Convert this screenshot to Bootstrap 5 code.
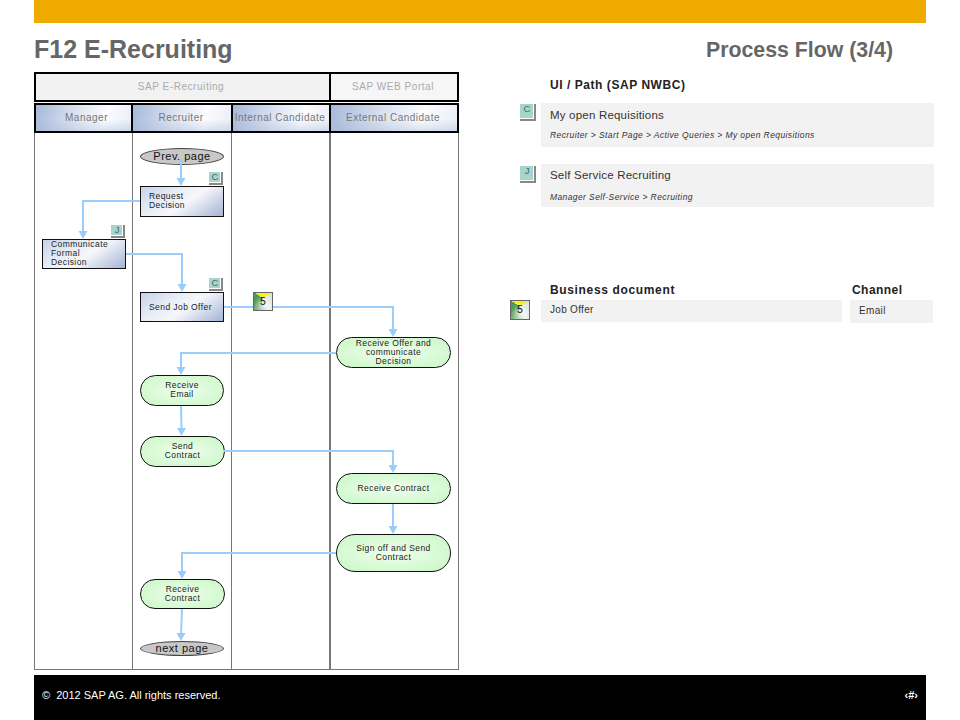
<!DOCTYPE html>
<html lang="en">
<head>
<meta charset="utf-8">
<title>F12 E-Recruiting</title>
<link href="https://cdn.jsdelivr.net/npm/bootstrap@5.3.0/dist/css/bootstrap.min.css" rel="stylesheet">
<style>
html,body{height:720px;overflow:hidden;background:#fff;}
body{font-family:"Liberation Sans",Arial,sans-serif;color:#222;}
.slide-bar{height:23px;margin:0 34px;background:#f0ab00;}
.slide-head{height:49px;margin:0 34px;padding-right:33px;}
.slide-title{font-size:25px;font-weight:700;color:#666;margin:0;line-height:1;padding-top:3px;}
.slide-sub{font-size:21.300px;font-weight:700;color:#666;margin:0;line-height:1;padding-top:6px;}
.slide-main{height:603px;padding-left:34px;}
.lanes{width:425px;height:598px;flex:none;}
.lane-groups,.lane-heads{display:grid;grid-template-columns:98px 100px 98px 129px;}
.lane-body{display:grid;grid-template-columns:99px 99px 99px 128px;}
.lane-groups{height:30px;margin-bottom:1px;}
.group-a,.group-b{border:2px solid #000;display:flex;align-items:center;justify-content:center;padding-bottom:2px;font-size:10px;letter-spacing:.55px;color:#aaa;}
.group-a{grid-column:span 3;background:#f2f2f2;border-right:1px solid #000;padding-right:3px;}
.group-b{background:#f6f6f6;border-left:1px solid #000;padding-right:2px;}
.lane-heads{height:30px;}
.lane-h{border:2px solid #000;border-left-width:1px;border-right-width:1px;display:flex;align-items:center;justify-content:center;padding-bottom:2px;font-size:10px;letter-spacing:.5px;color:#777;white-space:nowrap;background:linear-gradient(to top,rgba(160,180,215,.38),rgba(160,180,215,0) 45%),linear-gradient(105deg,#a6b8da 0,#dfe6f2 45%,#fbfcfe 72%,#e9eef6 100%);}
.lane-h:first-child{border-left-width:2px;padding-left:6px;}
.lane-h:nth-child(2){padding-right:2px;}
.lane-h:nth-child(3){padding-right:2px;}
.lane-h:last-child{border-right-width:2px;padding-right:2px;}
.lane-body{height:537px;}
.lane-c{border:1px solid #777;border-top:0;border-left:0;}
.lane-c:first-child{border-left:1px solid #777;}
.lane-c:nth-child(3){border-right-width:2px;}
.wires{left:0;top:0;width:425px;height:598px;pointer-events:none;z-index:3;}
.node{position:absolute;z-index:2;font-size:8.5px;line-height:9px;letter-spacing:.42px;color:#222;}
.node-step{border:1px solid #111;background:linear-gradient(145deg,#c8d3e8 0,#e9eef6 35%,#f6f7fb 55%,#a4b4d3 100%);padding-left:8px;}
.node-ext{border:1px solid #111;background:radial-gradient(ellipse at 50% 50%,#effeee 0,#c9f7c4 100%);text-align:center;}
.node-up{padding-bottom:2px;}
.node-page{border:1px solid #444;border-radius:50%;background:#c8c8c8;font-size:11px;line-height:1;letter-spacing:.5px;color:#111;text-align:center;}
.tag{position:absolute;z-index:4;width:14px;height:13px;background:#a8d4ce;border-right:2px solid #888;border-bottom:2px solid #888;box-shadow:inset -1px -1px 0 #fff;font-size:9.5px;line-height:10px;text-align:center;color:#3a6a6a;}
.doc-tag{border:1px solid #666;background:radial-gradient(circle at 60% 65%,rgba(255,255,255,.7),rgba(255,255,255,0) 65%),conic-gradient(from -55deg at 50% 32%,#f6ee1e 0 110deg,#dbe5de 110deg 170deg,#e6efe8 210deg,#8fc090 255deg,#5da35f 290deg,#4f9a55 305deg);color:#111;font-size:10.500px;line-height:16px;text-align:center;box-shadow:none;}
.side{width:393px;margin-left:82px;flex:none;position:relative;}
.side-h{font-size:12px;font-weight:700;letter-spacing:.55px;color:#222;line-height:14px;}
.side-row{background:#f2f2f2;}
.side-name{font-size:11.500px;letter-spacing:.2px;color:#333;line-height:14px;}
.side-path{font-size:8.500px;letter-spacing:.4px;font-style:italic;color:#333;line-height:10px;}
.panel-a{height:44px;margin-top:3px;padding:5px 0 0 9px;}
.panel-a .side-path{margin-top:8px;}
.panel-b{height:43px;margin-top:17px;padding:4px 0 0 9px;}
.panel-b .side-path{margin-top:10px;}
.side-top{padding:6px 0 0 9px;height:22px;box-sizing:content-box;}
.side-doc{margin-top:76px;}
.doc-col{width:301px;}
.doc-col .side-h{padding-left:9px;margin-bottom:3px;letter-spacing:.65px;}
.chan-col{width:83px;margin-left:8px;}
.chan-col .side-h{padding-left:2px;margin-bottom:3px;letter-spacing:.45px;}
.doc-box{height:22px;padding:3px 0 0 9px;font-size:10px;letter-spacing:.3px;color:#333;line-height:14px;}
.chan-box{height:23px;margin-top:1px;padding:4px 0 0 9px;font-size:10px;letter-spacing:.35px;color:#333;line-height:14px;}
.slide-foot{height:45px;margin:0 34px;padding:0 8px 4px;background:#000;color:#fff;font-size:11px;}
.foot-num{font-weight:700;font-size:11px;}
</style>
</head>
<body>
<div class="slide-bar"></div>
<div class="slide-head d-flex align-items-center justify-content-between">
  <h1 class="slide-title">F12 E-Recruiting</h1>
  <h2 class="slide-sub">Process Flow (3/4)</h2>
</div>
<div class="slide-main d-flex">
  <div class="lanes position-relative">
    <div class="lane-groups">
      <div class="group-a">SAP E-Recruiting</div>
      <div class="group-b">SAP WEB Portal</div>
    </div>
    <div class="lane-heads">
      <div class="lane-h">Manager</div>
      <div class="lane-h">Recruiter</div>
      <div class="lane-h">Internal Candidate</div>
      <div class="lane-h">External Candidate</div>
    </div>
    <div class="lane-body">
      <div class="lane-c"></div><div class="lane-c"></div><div class="lane-c"></div><div class="lane-c"></div>
    </div>
    <svg class="wires position-absolute" viewBox="0 0 425 598" aria-hidden="true">
      <g fill="none" stroke="#9accfc" stroke-width="2">
        <path d="M147 88V108"/>
        <path d="M106 129H49V161"/>
        <path d="M92 182H148V214"/>
        <path d="M190 235H359V259"/>
        <path d="M302 281H147V297"/>
        <path d="M147 334L147.500 358"/>
        <path d="M190 379H359V395"/>
        <path d="M359 432V456"/>
        <path d="M302 481H148V501"/>
        <path d="M148 537L147 563"/>
      </g>
      <g fill="#9accfc">
        <path d="M142.500 106H151.500L147 114Z"/>
        <path d="M44.500 159H53.500L49 167Z"/>
        <path d="M143.500 212H152.500L148 220Z"/>
        <path d="M354.500 257H363.500L359 265Z"/>
        <path d="M142.500 295H151.500L147 303Z"/>
        <path d="M143 356H152L147.500 364Z"/>
        <path d="M354.500 393H363.500L359 401Z"/>
        <path d="M354.500 454H363.500L359 462Z"/>
        <path d="M143.500 499H152.500L148 507Z"/>
        <path d="M142.500 561H151.500L147 569Z"/>
      </g>
    </svg>
    <div class="node node-page d-flex align-items-center justify-content-center" style="left:106px;top:76px;width:84px;height:17px">Prev. page</div>
    <div class="tag" style="left:175px;top:100px">C</div>
    <div class="node node-step node-up d-flex align-items-center" style="left:106px;top:114px;width:84px;height:31px">Request<br>Decision</div>
    <div class="tag" style="left:77px;top:153px">J</div>
    <div class="node node-step node-up d-flex align-items-center" style="left:8px;top:167px;width:84px;height:30px">Communicate<br>Formal<br>Decision</div>
    <div class="tag" style="left:175px;top:206px">C</div>
    <div class="node node-step d-flex align-items-center" style="left:106px;top:220px;width:84px;height:30px">Send Job Offer</div>
    <div class="tag doc-tag" style="left:219px;top:220px;width:20px;height:19px">5</div>
    <div class="node node-ext rounded-pill d-flex align-items-center justify-content-center" style="left:302px;top:265px;width:115px;height:31px">Receive Offer and<br>communicate<br>Decision</div>
    <div class="node node-ext node-up rounded-pill d-flex align-items-center justify-content-center" style="left:106px;top:303px;width:84px;height:31px">Receive<br>Email</div>
    <div class="node node-ext node-up rounded-pill d-flex align-items-center justify-content-center" style="left:106px;top:364px;width:85px;height:31px">Send<br>Contract</div>
    <div class="node node-ext rounded-pill d-flex align-items-center justify-content-center" style="left:302px;top:401px;width:115px;height:31px">Receive Contract</div>
    <div class="node node-ext rounded-pill d-flex align-items-center justify-content-center" style="left:302px;top:462px;width:115px;height:38px">Sign off and Send<br>Contract</div>
    <div class="node node-ext rounded-pill d-flex align-items-center justify-content-center" style="left:106px;top:507px;width:85px;height:30px">Receive<br>Contract</div>
    <div class="node node-page d-flex align-items-center justify-content-center" style="left:106px;top:569px;width:84px;height:15px">next page</div>
  </div>
  <div class="side">
    <div class="side-top side-h">UI / Path (SAP NWBC)</div>
    <div class="position-relative">
      <div class="tag" style="left:-21px;top:1px;width:16px;height:17px">C</div>
      <div class="side-row panel-a">
        <div class="side-name">My open Requisitions</div>
        <div class="side-path">Recruiter &gt; Start Page &gt; Active Queries &gt; My open Requisitions</div>
      </div>
    </div>
    <div class="position-relative">
      <div class="tag" style="left:-21px;top:2px;width:16px;height:17px">J</div>
      <div class="side-row panel-b">
        <div class="side-name">Self Service Recruiting</div>
        <div class="side-path">Manager Self-Service &gt; Recruiting</div>
      </div>
    </div>
    <div class="side-doc d-flex position-relative">
      <div class="tag doc-tag" style="left:-31px;top:17px;width:20px;height:20px">5</div>
      <div class="doc-col">
        <div class="side-h">Business document</div>
        <div class="side-row doc-box">Job Offer</div>
      </div>
      <div class="chan-col">
        <div class="side-h">Channel</div>
        <div class="side-row chan-box">Email</div>
      </div>
    </div>
  </div>
</div>
<div class="slide-foot d-flex align-items-center justify-content-between">
  <span>©&nbsp; 2012 SAP AG. All rights reserved.</span>
  <span class="foot-num">‹#›</span>
</div>
</body>
</html>
